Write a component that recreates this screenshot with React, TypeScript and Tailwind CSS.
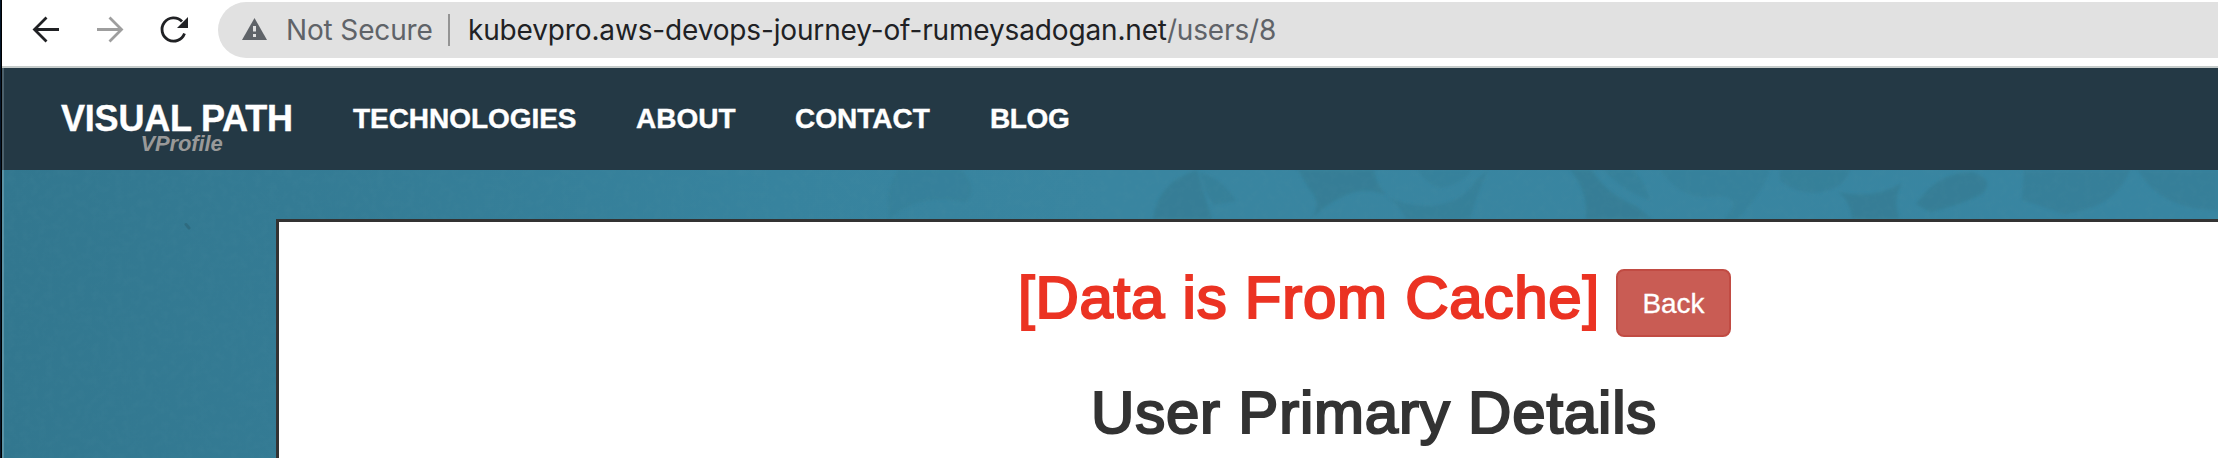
import React from "react";

function ToolbarIcons() {
  return (
    <svg width="216" height="66" viewBox="2 0 216 66" fill="none" className="shrink-0">
      <g stroke="#202124" strokeWidth="2.8">
        <path d="M59 29.500H34.500M46.500 17.500 34.500 29.500 46.500 41.500" />
        <path d="M184.500 33.500A11.600 11.600 0 1 1 182 21.500" />
      </g>
      <path d="M188 17V28H177Z" fill="#202124" />
      <path d="M97 29.500H121.500M109.500 17.500 121.500 29.500 109.500 41.500" stroke="#9e9e9e" strokeWidth="2.8" />
    </svg>
  );
}

function Texture() {
  return (
    <svg width="2216" height="288" viewBox="2 170 2216 288" className="absolute inset-0">
      <defs>
        <linearGradient id="bg" x1="0" y1="0" x2="1" y2="0">
          <stop offset="0" stopColor="#32778f" />
          <stop offset="0.13" stopColor="#347b94" />
          <stop offset="0.35" stopColor="#37839e" />
          <stop offset="0.5" stopColor="#3985a0" />
          <stop offset="1" stopColor="#3885a1" />
        </linearGradient>
        <filter id="soft" x="-5%" y="-20%" width="110%" height="140%">
          <feGaussianBlur stdDeviation="1.5" />
        </filter>
        <filter id="grain" x="0" y="0" width="100%" height="100%">
          <feTurbulence type="fractalNoise" baseFrequency="0.13" numOctaves="3" seed="4" />
          <feColorMatrix values="0 0 0 0 0.1  0 0 0 0 0.3  0 0 0 0 0.38  0.5 0 0 0 -0.18" />
        </filter>
      </defs>
      <rect x="2" y="170" width="2216" height="288" fill="url(#bg)" />
      <g fill="#347a91" filter="url(#soft)" opacity="0.65">
        <path d="M890 219Q884 190 898 170H962Q978 190 966 202Q918 192 890 219Z" opacity="0.5" />
        <path d="M1153 219Q1158 182 1197 170Q1203 190 1212 219Z" />
        <path d="M1200 172Q1224 180 1236 201L1214 205Q1202 190 1200 172Z" opacity="0.7" />
        <path d="M1298 170H1374Q1376 184 1386 195Q1364 186 1344 196Q1322 206 1312 219Q1322 202 1310 190Z" />
        <path d="M1386 195Q1400 206 1432 206Q1464 202 1476 180L1488 170Q1476 196 1470 219H1406Q1400 206 1386 195Z" opacity="0.7" />
        <path d="M1418 170H1472Q1462 184 1440 188Q1424 182 1418 170Z" opacity="0.5" />
        <path d="M1570 170H1592Q1606 194 1636 206L1652 219H1586Q1588 190 1570 170Z" />
        <path d="M1604 170H1634Q1646 184 1650 200Q1624 192 1604 170Z" opacity="0.6" />
        <path d="M1660 170H1770Q1764 190 1738 219H1724Q1744 198 1720 196Q1684 204 1660 170Z" opacity="0.5" />
        <path d="M1780 170H1850Q1844 190 1815 193Q1792 192 1780 180Z" opacity="0.7" />
        <path d="M1838 192Q1874 200 1902 183Q1892 200 1900 219H1852Q1850 200 1838 192Z" />
        <path d="M1916 204Q1938 172 1972 172Q1996 180 1982 194Q1958 206 1930 212Z" />
        <path d="M2024 170H2130Q2116 208 2064 214Q2042 206 2022 200Z" opacity="0.75" />
        <path d="M2138 170H2218V210Q2160 210 2138 170Z" opacity="0.75" />
      </g>
      <rect x="2" y="170" width="2216" height="288" filter="url(#grain)" opacity="0.35" />
      <path d="M186 224.500 189 228" stroke="#2b6274" strokeWidth="3" strokeLinecap="round" opacity="0.6" />
    </svg>
  );
}

export default function App() {
  return (
    <div className="flex h-[458px] w-full overflow-hidden bg-white font-['Liberation_Sans',Arial,sans-serif]">
      <div className="w-[2px] shrink-0 border-r border-black bg-[#04162a]" />
      <div className="flex min-w-0 flex-1 flex-col">
        <div className="flex h-[66px] bg-white">
          <ToolbarIcons />
          <div className="mt-[2px] flex h-14 flex-1 items-center rounded-l-full bg-[#e1e1e1] pl-6 font-[Inter,sans-serif] text-[28px] tracking-[-0.15px] whitespace-pre text-[#5f6368]">
            <svg width="26" height="22" viewBox="0 0 26 22" className="mb-0.5 shrink-0">
              <path d="M12.500 0 25 22H0Z" fill="#5f6368" />
              <path d="M12.500 8v5.500M12.500 16v3" stroke="#e1e1e1" strokeWidth="3" />
            </svg>
            <span className="ml-[18px] w-[162px]">Not Secure</span>
            <span className="h-8 w-[2px] bg-[#949494]" />
            <span className="ml-[18px] text-[#202124]">kubevpro.aws-devops-journey-of-rumeysadogan.net</span>
            <span>/users/8</span>
          </div>
        </div>
        <div className="h-[2px] bg-[#c5cbca]" />
        <nav className="flex h-[102px] border-l-2 border-[#4c606b] bg-[#243945] text-[28px] leading-10 font-bold whitespace-nowrap text-white">
          <div className="flex w-[290px] flex-col items-center pt-[31px] pl-[57px]">
            <span className="h-[41px] self-start text-[36px] tracking-[-0.2px] [-webkit-text-stroke:0.4px_white]">VISUAL PATH</span>
            <span className="-mt-[8px] ml-2 h-5 text-[22px] leading-6 tracking-[-0.15px] text-[#999] italic">VProfile</span>
          </div>
          <div className="flex pt-[31px] pl-[59px] [-webkit-text-stroke:0.4px_white]">
            <span className="w-[283px] tracking-[-0.05px]">TECHNOLOGIES</span>
            <span className="w-[159px]">ABOUT</span>
            <span className="w-[195px]">CONTACT</span>
            <span className="tracking-[-0.4px]">BLOG</span>
          </div>
        </nav>
        <main className="relative flex-1 pt-[49px] pl-[274px]">
          <Texture />
          <div className="absolute inset-y-0 left-0 w-[2px] bg-white/20" />
          <section className="relative h-full border-t-[3px] border-l-[3px] border-[#333] bg-white whitespace-nowrap">
            <div className="flex h-[119px] pt-[43px] pl-[739px]">
              <h2 className="w-[598px] text-[60px] leading-[66px] tracking-[0.75px] text-[#eb3323] [-webkit-text-stroke:2.2px_#eb3323]">[Data is From Cache]</h2>
              <button className="mt-[4px] h-[68px] w-[115px] rounded-lg border-2 border-[#c14b43] bg-[#c95c54] pt-0.5 text-[28px] text-white [-webkit-text-stroke:0.3px_white]">Back</button>
            </div>
            <h2 className="mt-[39px] pl-[812px] text-[60px] leading-[66px] tracking-[0.8px] text-[#333] [-webkit-text-stroke:2.2px_#333]">User Primary Details</h2>
          </section>
        </main>
      </div>
    </div>
  );
}
